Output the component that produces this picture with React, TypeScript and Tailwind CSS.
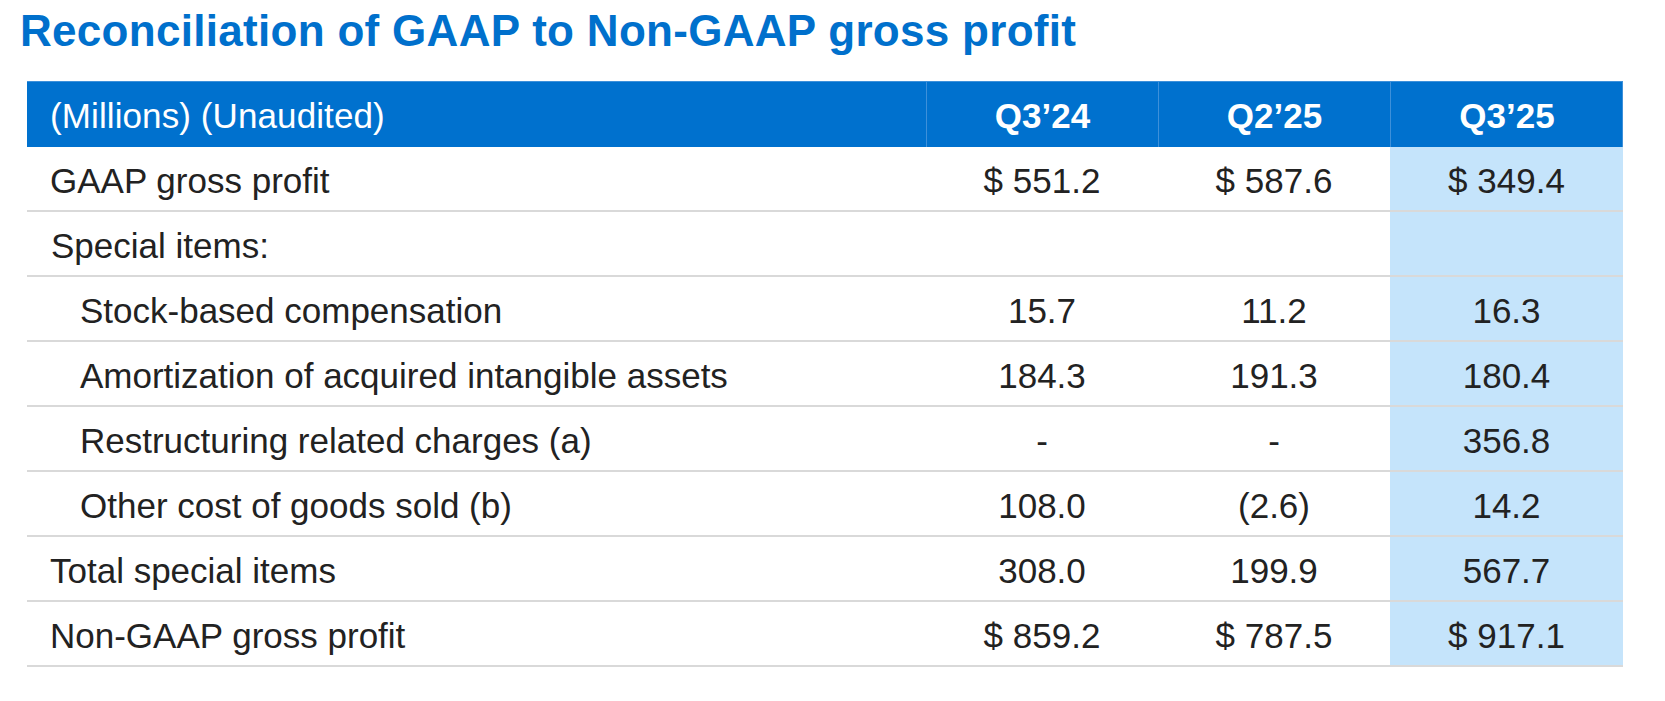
import React from "react";

type Row = { label: string; indent: 0 | 1 | 2; v: [string, string, string] };

const rows: Row[] = [
  { label: "GAAP gross profit", indent: 0, v: ["$ 551.2", "$ 587.6", "$ 349.4"] },
  { label: "Special items:", indent: 1, v: ["", "", ""] },
  { label: "Stock-based compensation", indent: 2, v: ["15.7", "11.2", "16.3"] },
  { label: "Amortization of acquired intangible assets", indent: 2, v: ["184.3", "191.3", "180.4"] },
  { label: "Restructuring related charges (a)", indent: 2, v: ["-", "-", "356.8"] },
  { label: "Other cost of goods sold (b)", indent: 2, v: ["108.0", "(2.6)", "14.2"] },
  { label: "Total special items", indent: 0, v: ["308.0", "199.9", "567.7"] },
  { label: "Non-GAAP gross profit", indent: 0, v: ["$ 859.2", "$ 787.5", "$ 917.1"] },
];

export default function App() {
  return (
    <div
      className="w-[1665px] h-[701px] bg-white overflow-hidden"
      style={{ fontFamily: '"Liberation Sans", Arial, Helvetica, sans-serif' }}
    >
      <h1 className="ml-[20px] mt-[9px] text-[44px] leading-[44px] font-bold text-[#0070cc] tracking-[0.3px]">
        Reconciliation of GAAP to Non-GAAP gross profit
      </h1>

      <div className="ml-[27px] mt-[28px] w-[1596px]">
        {/* header */}
        <div className="grid grid-cols-[899px_232px_232px_233px] h-[66px] bg-[#0071ce] text-white text-[35px] leading-[35px] border-t border-r border-[#3d90da]">
          <div className="flex items-center pl-[23px] pt-[2px] tracking-[0.1px]">(Millions) (Unaudited)</div>
          <div className="flex items-center justify-center pt-[2px] font-bold border-l border-[#3d90da]">Q3’24</div>
          <div className="flex items-center justify-center pt-[2px] font-bold border-l border-[#3d90da]">Q2’25</div>
          <div className="flex items-center justify-center pt-[2px] font-bold border-l border-[#3d90da]">Q3’25</div>
        </div>

        {/* body */}
        {rows.map((r, i) => (
          <div
            key={i}
            className="grid grid-cols-[899px_232px_232px_233px] h-[65px] border-b-2 border-[#d9d9d9] text-[35px] leading-[35px] text-[#222222]"
          >
            <div
              className={
                "flex items-center pt-[4px] " +
                (r.indent === 0 ? "pl-[23px]" : r.indent === 1 ? "pl-[24px]" : "pl-[53px]")
              }
            >
              {r.label}
            </div>
            <div className="flex items-center justify-center pt-[4px]">{r.v[0]}</div>
            <div className="flex items-center justify-center pt-[4px]">{r.v[1]}</div>
            <div className="flex items-center justify-center pt-[4px] bg-[#c5e4fb]">{r.v[2]}</div>
          </div>
        ))}
      </div>
    </div>
  );
}
